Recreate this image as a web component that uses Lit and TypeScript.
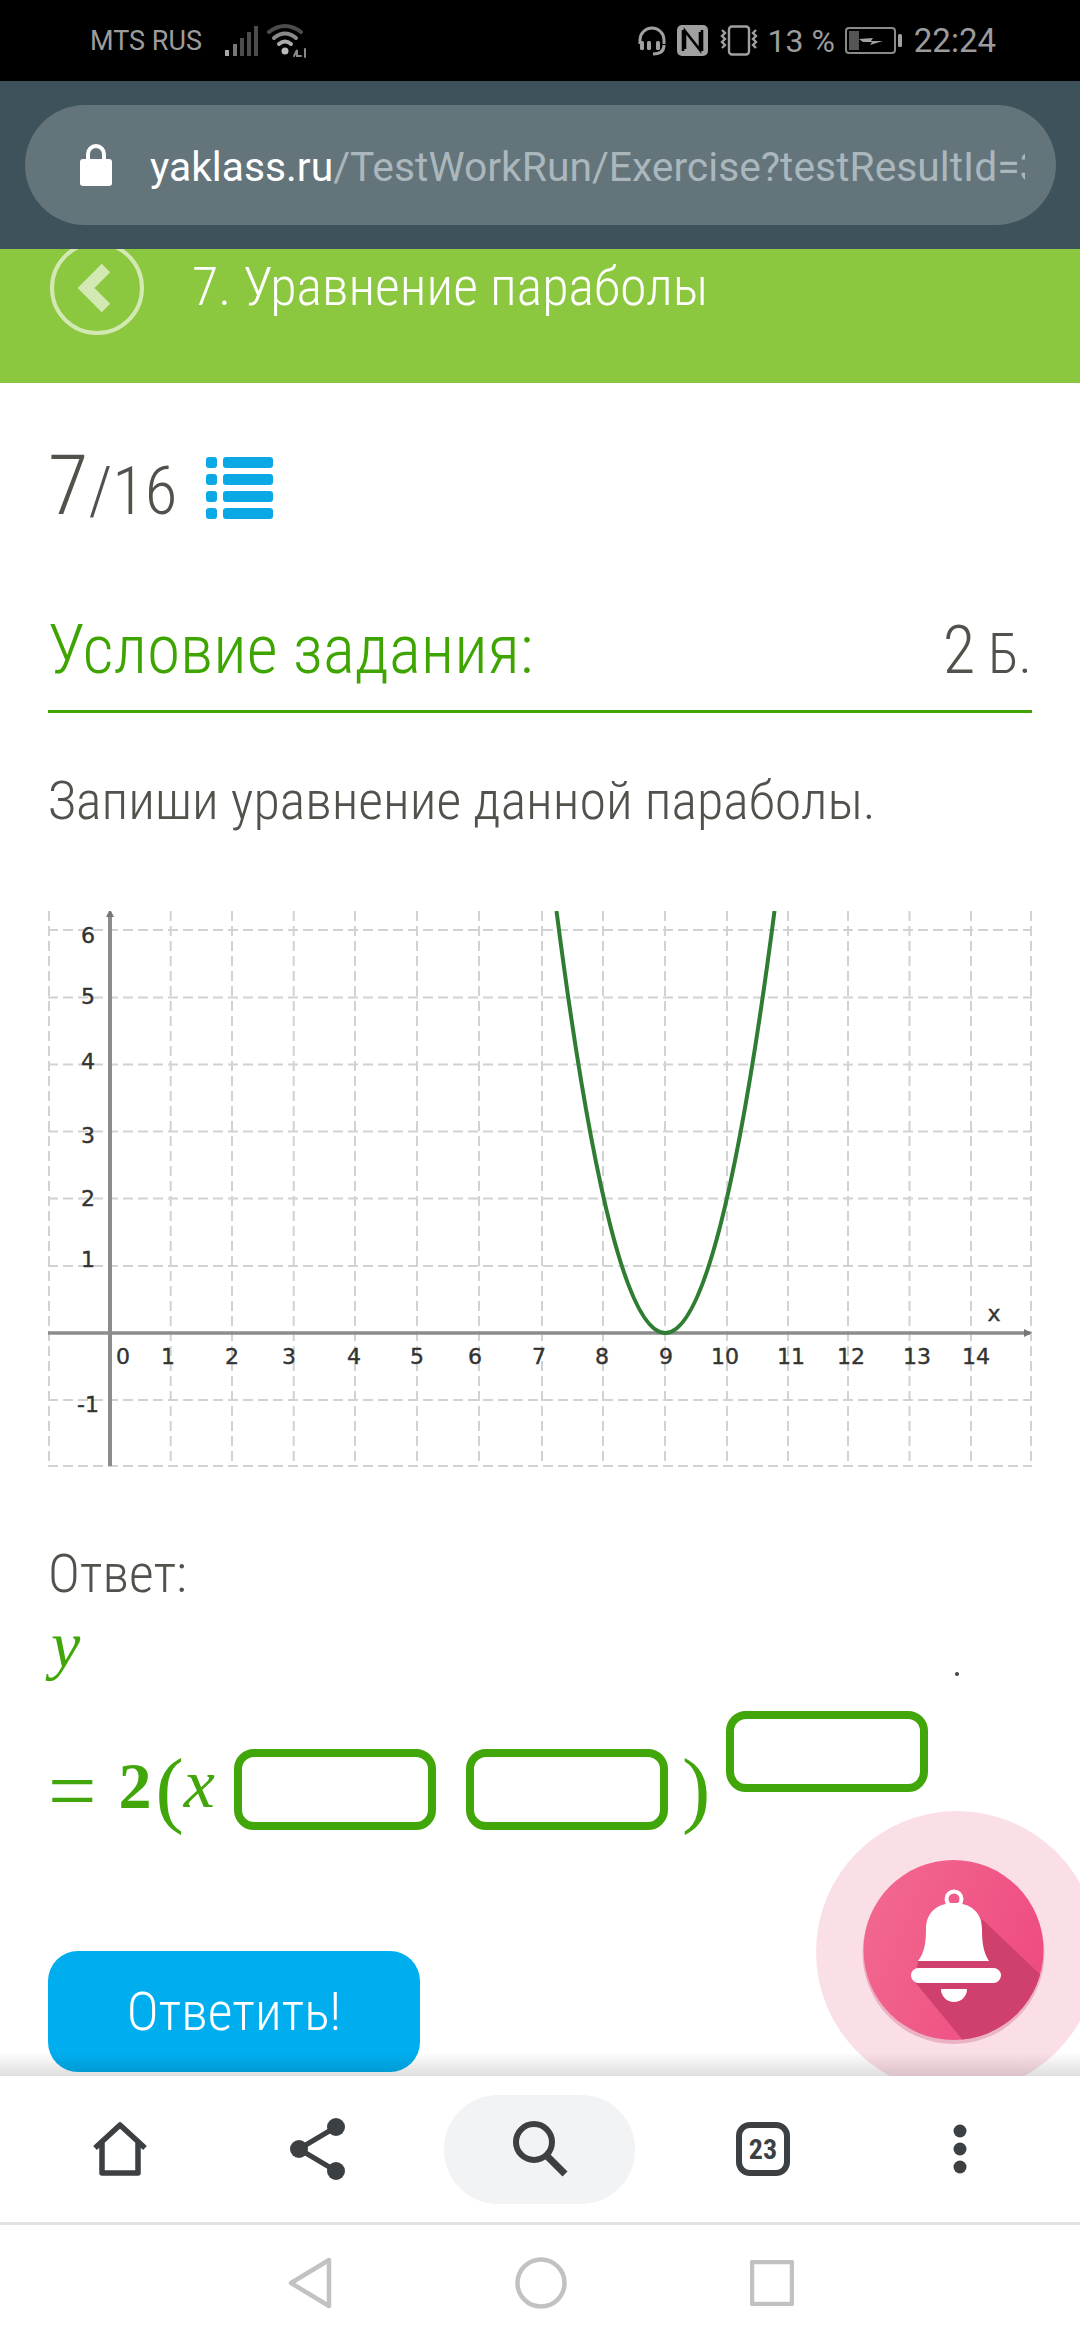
import { LitElement, html, css, svg } from "lit";
import { customElement } from "lit/decorators.js";

const GX = [170.7, 232, 293.7, 355, 417, 479, 542, 603, 665, 727, 788, 848, 909.5, 971];
const GY = [929, 996.5, 1063.5, 1130.5, 1197.5, 1265, 1399];
const XL: [string, number][] = [["0", 123], ["1", 168], ["2", 232], ["3", 289], ["4", 354], ["5", 417], ["6", 475], ["7", 539], ["8", 602], ["9", 666], ["10", 725], ["11", 791], ["12", 851], ["13", 917], ["14", 976]];
const YL: [string, number][] = [["6", 942], ["5", 1003], ["4", 1068], ["3", 1142], ["2", 1205], ["1", 1266], ["-1", 1411]];

function graph() {
  const ox = 48, oy = 910;
  return html`<svg class="graph" width="984" height="556" viewBox="${ox} ${oy} 984 556">
    <g stroke="#d2d2d2" stroke-width="2" stroke-dasharray="10 5" fill="none">
      ${[49, ...GX, 1031].map((x) => svg`<line x1=${x} x2=${x} y1="910" y2="1465"></line>`)}
      ${[...GY, 1465].map((y) => svg`<line x1="48" x2="1032" y1=${y} y2=${y}></line>`)}
    </g>
    <g stroke="#8c8c8c" fill="none">
      <line x1="110" x2="110" y1="912" y2="1465" stroke-width="4"></line>
      <line x1="48" x2="1030" y1="1332" y2="1332" stroke-width="3.5"></line>
    </g>
    <path d="M110 908l-4 8h8zM1032 1332l-8-4v8z" fill="#777"></path>
    <path d="M556.5 910Q665 1754 774.5 910" fill="none" stroke="#2f7d32" stroke-width="4"></path>
    <g class="gl" text-anchor="middle">
      ${XL.map(([t, x]) => svg`<text x=${x} y="1363">${t}</text>`)}
      ${YL.map(([t, y]) => svg`<text x="88" y=${y}>${t}</text>`)}
      <text x="994" y="1320">x</text>
    </g>
  </svg>`;
}

@customElement("app-root")
export class AppRoot extends LitElement {
  static styles = css`
    :host { display: block; width: 1080px; height: 2340px; font-family: Roboto, "Noto Sans", sans-serif; background: #fff; overflow: hidden; position: relative; }
    .page { display: flex; flex-direction: column; height: 2340px; }
    .status { height: 81px; background: #000; color: #9c9c9c; display: flex; align-items: center; flex: none; font-size: 28px; padding-left: 90px; padding-right: 84px; }
    .carrier { font-size: 27px; width: 135px; }
    .wifi { margin-left: 8px; }
    .nfc { margin-left: 10px; }
    .vib { margin-left: 11px; }
    .sright { margin-left: auto; display: flex; align-items: center; }
    .pct { font-size: 32px; margin: 0 10px 0 8px; }
    .time { font-size: 33px; margin-left: 11px; }
    .urlbar { height: 168px; background: #3d525b; flex: none; display: flex; align-items: center; padding: 0 24px 0 25px; }
    .pill { flex: 1; height: 120px; border-radius: 60px; background: #63747b; display: flex; align-items: center; padding-left: 55px; }
    .urlclip { width: 875px; margin: 3px 0 0 38px; overflow: hidden; white-space: nowrap; font-size: 40.8px; color: #aab7bd; }
    .urlclip b { font-weight: 400; color: #fff; }
    .head { height: 134px; flex: none; background: #8bc83f; overflow: hidden; display: flex; align-items: flex-start; padding-left: 50px; color: #fff; }
    .back { margin-top: -8px; flex: none; }
    .head h1 { margin: 3px 0 0 48px; font-size: 54px; font-stretch: 87.5%; font-weight: 300; line-height: 70px; color: #fff; }
    main { flex: 1; padding: 0 48px; min-height: 0; overflow: hidden; color: #52524c; font-weight: 300; font-stretch: 87.5%; }
    .count { display: flex; align-items: center; height: 62px; margin-top: 74px; gap: 29px; line-height: 62px; }
    .count .n { font-size: 67px; }
    .count .n b { font-size: 83px; font-weight: 300; }
    .cond { display: flex; justify-content: space-between; align-items: baseline; height: 106px; border-bottom: 3px solid #3ea500; box-sizing: border-box; line-height: 86px; color: #3ea500; font-size: 67.6px; margin-top: 88px; }
    .pts { color: #52524c; font-size: 56px; }
    .pts b { font-size: 67px; font-weight: 300; }
    .task { margin: 58px 0 0; font-size: 54px; line-height: 60px; }
    .graph { display: block; margin-top: 80px; }
    .gl { font: 22px "DejaVu Sans", sans-serif; fill: #333; stroke: #333; stroke-width: .4; }
    .ans { margin-top: 77px; font-size: 54px; line-height: 60px; }
    .math { color: #41a60a; font-family: "Liberation Serif", serif; font-size: 70px; position: relative; }
    .y { font-style: italic; font-size: 66px; line-height: 60px; margin: 11px 0 0 3px; height: 60px; }
    .eq { display: flex; align-items: flex-start; height: 119px; margin-top: 36px; }
    .eq span { line-height: 82px; }
    .equals { font-size: 86px; margin-top: 39px; }
    .two { font-size: 66px; font-weight: 700; margin: 34px 0 0 22px; }
    .paren { font-size: 85px; margin-top: 36px; }
    .popen { margin-left: 4px; }
    .px { font-style: italic; margin: 32px 0 0 0; }
    .pclose { margin-left: 14px; }
    .box { width: 202px; height: 81px; border: 8px solid #41a60a; border-radius: 20px; box-sizing: border-box; flex: none; margin-top: 38px; }
    .b1 { margin-left: 19px; }
    .b2 { margin-left: 30px; }
    .b3 { margin-top: 0; margin-left: 16px; }
    .dot { position: absolute; left: 907px; top: 57px; width: 4px; height: 4px; border-radius: 50%; background: #444; }
    .btn { display: flex; width: 372px; height: 121px; align-items: center; justify-content: center; border-radius: 30px; background: #00aeef; color: #fff; font-size: 54px; font-weight: 300; margin-top: 121px; }
    .bell { position: absolute; left: 816px; top: 1811px; z-index: 1; }
    .toolbar { height: 146px; flex: none; background: #fff; display: flex; align-items: center; position: relative; z-index: 2; }
    .toolbar::before { content: ""; position: absolute; left: 0; right: 0; top: -24px; height: 24px; background: linear-gradient(rgba(0,0,0,0), rgba(0,0,0,.13)); }
    .slot { display: flex; align-items: center; justify-content: center; flex: none; }
    .s1 { width: 120px; margin-left: 60px; }
    .s2 { width: 120px; margin-left: 78px; }
    .s3 { width: 191px; height: 109px; border-radius: 54px; background: #f1f3f4; margin-left: 66px; }
    .s4 { width: 120px; margin-left: 68px; }
    .s5 { width: 40px; margin-left: 117px; }
    .tabnum { font: 700 28px Roboto, sans-serif; font-stretch: 75%; }
    .nav { height: 118px; flex: none; box-sizing: border-box; background: #fff; border-top: 3px solid #e2e2e2; display: flex; align-items: center; justify-content: center; gap: 183px; padding-left: 2px; }
  `;

  render() {
    return html`<div class="page">
      <div class="status">
        <span class="carrier">MTS RUS</span>
        <svg width="34" height="32" viewBox="0 0 34 32"><g fill="#4c4c4c"><rect x="0" y="25" width="4" height="6" fill="#a8a8a8"></rect><rect x="8" y="19" width="4" height="12" fill="#777"></rect><rect x="15" y="13" width="4" height="18"></rect><rect x="22" y="7" width="4" height="24"></rect><rect x="29" y="1" width="4" height="30"></rect></g></svg>
        <svg class="wifi" width="42" height="36" viewBox="0 0 42 36" fill="none" stroke-linecap="round"><path d="M2 9Q18-3 34 9" stroke="#4c4c4c" stroke-width="4"></path><path d="M7 15Q18 6 29 15" stroke="#8a8a8a" stroke-width="4"></path><path d="M12 21Q18 16 24 21" stroke="#aaa" stroke-width="4"></path><circle cx="18" cy="28" r="3.5" fill="#bbb"></circle><path d="M27 33l3-6v6h4M38 26v8" stroke="#888" stroke-width="2"></path></svg>
        <div class="sright">
          <svg width="30" height="31" viewBox="0 0 30 31" fill="none" stroke="#a0a0a0" stroke-width="3"><path d="M3 19V15a12 12 0 0 1 24 0v4M27 20c0 6-4 9-11 9"></path><rect x="3" y="16" width="4" height="9" fill="#a0a0a0" rx="1.5" stroke="none"></rect><rect x="10" y="16" width="4" height="9" fill="#a0a0a0" rx="1.5" stroke="none"></rect><rect x="19" y="16" width="4" height="9" fill="#a0a0a0" rx="1.5" stroke="none"></rect></svg>
          <svg class="nfc" width="31" height="31" viewBox="0 0 31 31"><rect width="31" height="31" rx="5" fill="#a0a0a0"></rect><path d="M8 24V6l15 19V7M6 5v21M25 5v21" fill="none" stroke="#000" stroke-width="2.6"></path></svg>
          <svg class="vib" width="40" height="31" viewBox="0 0 40 31" fill="none" stroke="#a0a0a0" stroke-width="2.4"><rect x="10" y="1.5" width="20" height="28" rx="3"></rect><path d="M3 5l3 3-3 3 3 3-3 3 3 3-3 3M37 5l-3 3 3 3-3 3 3 3-3 3 3 3"></path></svg>
          <span class="pct">13 %</span>
          <svg width="58" height="27" viewBox="0 0 58 27"><rect x="1" y="1" width="49" height="25" rx="3" fill="none" stroke="#8a8a8a" stroke-width="2"></rect><rect x="4" y="4" width="10" height="19" fill="#555"></rect><path d="M14 12l14-1-2 3h12l-13 4 2-3H18z" fill="#a0a0a0"></path><rect x="53" y="7" width="4" height="13" rx="1.5" fill="#a0a0a0"></rect></svg>
          <span class="time">22:24</span>
        </div>
      </div>
      <div class="urlbar"><div class="pill">
        <svg width="32" height="42" viewBox="0 0 32 42" fill="#fff"><path d="M8 18V10a8 8 0 0 1 16 0v8" fill="none" stroke="#fff" stroke-width="4"></path><rect y="15" width="32" height="27" rx="3"></rect></svg>
        <div class="urlclip"><b>yaklass.ru</b>/TestWorkRun/Exercise?testResultId=3</div>
      </div></div>
      <div class="head">
        <svg class="back" width="94" height="94" viewBox="0 0 94 94" fill="none"><circle cx="47" cy="47" r="45" stroke="#d3e9b3" stroke-width="4"></circle><path d="M56 27L36 47l20 20" stroke="#d3e9b3" stroke-width="12"></path></svg>
        <h1>7. Уравнение параболы</h1>
      </div>
      <main>
        <div class="count"><span class="n"><b>7</b>/16</span>
          <svg width="67" height="62" viewBox="0 0 67 62" fill="#0aa9e6"><rect width="11" height="11" y="0" rx="3"></rect><rect x="17" width="50" height="11" rx="3"></rect><rect y="17" width="11" height="11" rx="3"></rect><rect x="17" y="17" width="50" height="11" rx="3"></rect><rect y="34" width="11" height="11" rx="3"></rect><rect x="17" y="34" width="50" height="11" rx="3"></rect><rect y="51" width="11" height="11" rx="3"></rect><rect x="17" y="51" width="50" height="11" rx="3"></rect></svg>
        </div>
        <div class="cond"><span>Условие задания:</span><span class="pts"><b>2</b> Б.</span></div>
        <p class="task">Запиши уравнение данной параболы.</p>
        ${graph()}
        <div class="ans">Ответ:</div>
        <div class="math">
          <div class="y">y</div>
          <div class="dot"></div>
          <div class="eq">
            <span class="equals">=</span><span class="two">2</span><span class="paren popen">(</span><span class="px">x</span>
            <div class="box b1"></div><div class="box b2"></div>
            <span class="paren pclose">)</span><div class="box b3"></div>
          </div>
        </div>
        <div class="btn">Ответить!</div>
      </main>
      <div class="toolbar">
        <div class="slot s1"><svg width="56" height="56" viewBox="0 0 56 56" fill="none" stroke="#3c4043" stroke-width="5.5" stroke-linejoin="round"><path d="M3 27L28 4l25 23M10 22v30h36V22"></path></svg></div>
        <div class="slot s2"><svg width="56" height="62" viewBox="0 0 56 62" fill="#3c4043"><circle cx="9" cy="31" r="9"></circle><circle cx="46" cy="9" r="9"></circle><circle cx="46" cy="53" r="9"></circle><path d="M9 31L46 9M9 31l37 22" stroke="#3c4043" stroke-width="5"></path></svg></div>
        <div class="slot s3"><svg width="56" height="56" viewBox="0 0 56 56" fill="none" stroke="#3c4043"><circle cx="22" cy="21" r="18" stroke-width="6"></circle><path d="M34 34l19 19" stroke-width="7"></path></svg></div>
        <div class="slot s4"><svg width="54" height="54" viewBox="0 0 54 54"><rect x="3" y="3" width="48" height="48" rx="11" fill="none" stroke="#3c4043" stroke-width="6"></rect><text x="27" y="37" text-anchor="middle" class="tabnum" fill="#3c4043">23</text></svg></div>
        <div class="slot s5"><svg width="14" height="50" viewBox="0 0 14 50" fill="#3c4043"><circle cx="7" cy="7" r="6.5"></circle><circle cx="7" cy="25" r="6.5"></circle><circle cx="7" cy="43" r="6.5"></circle></svg></div>
      </div>
      <div class="nav">
        <svg width="44" height="52" viewBox="0 0 44 52" fill="none" stroke="#c2c2c2" stroke-width="4.5" stroke-linejoin="round"><path d="M41 3v46L3 26z"></path></svg>
        <svg width="52" height="52" viewBox="0 0 52 52" fill="none" stroke="#c2c2c2" stroke-width="4.5"><circle cx="26" cy="26" r="23.5"></circle></svg>
        <svg width="44" height="46" viewBox="0 0 44 46" fill="none" stroke="#c2c2c2" stroke-width="4.5"><rect x="2" y="2" width="40" height="42" rx="1"></rect></svg>
      </div>
    </div>
    <svg class="bell" width="264" height="265" viewBox="816 1811 264 265">
      <defs>
        <linearGradient id="bg" x1="0" y1="0.3" x2="1" y2="0.7"><stop offset="0" stop-color="#f2678f"></stop><stop offset="1" stop-color="#ee4b7f"></stop></linearGradient>
        <clipPath id="cc"><circle cx="953.5" cy="1950" r="90"></circle></clipPath>
      </defs>
      <circle cx="957" cy="1952" r="141" fill="#fbdfe6"></circle>
      <circle cx="953.5" cy="1953" r="91" fill="#eab2c4"></circle>
      <circle cx="953.5" cy="1950" r="90" fill="url(#bg)"></circle>
      <path clip-path="url(#cc)" d="M983 1920L1050 1984V2055H975L915 1982 918 1961z" fill="#cf406c"></path>
      <g fill="#fff">
        <path d="M918 1961c7-9 8-20 8-32 0-17 12-26 28-26s28 9 28 26c0 12 1 23 7 32z"></path>
        <rect x="911" y="1968" width="90" height="15" rx="7.5"></rect>
        <path d="M941 1989h26a13 13 0 0 1-26 0z"></path>
        <circle cx="954" cy="1899" r="7.5" fill="none" stroke="#fff" stroke-width="4"></circle>
      </g>
    </svg>`;
  }
}
